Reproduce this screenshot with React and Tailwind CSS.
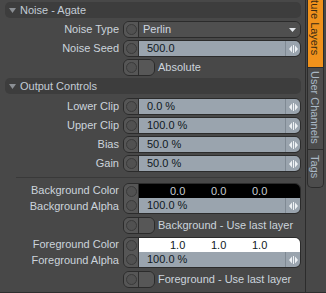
import React from "react";

const Toggle = ({ h = "h-full" }) => (
  <div className={`w-[15px] ${h} shrink-0 bg-[#565656] border-r border-[#2d2d2d] flex items-center justify-center`}>
    <div className="w-[11px] h-[11px] rounded-full border border-[#3a3a3a] bg-[#515151]" />
  </div>
);

const Arrows = () => (
  <div className="w-[15px] h-full shrink-0 border-l border-[#7f8993] flex items-center justify-center">
    <svg width="9" height="8" viewBox="0 0 9 8">
      <path d="M3 0.5 L0 4 L3 7.5Z M6 0.5 L9 4 L6 7.5Z" fill="#eef1f4" />
      <rect x="4" y="0" width="1" height="8" fill="#eef1f4" />
    </svg>
  </div>
);

const Header = ({ title, className = "" }) => (
  <div className={`h-[16px] rounded-[5px] bg-[#3d3d3d] flex items-center pl-[4px] ${className}`}>
    <svg width="7" height="5" viewBox="0 0 7 5" className="mr-[4px]">
      <path d="M0 0 L7 0 L3.5 5Z" fill="#8b8f94" />
    </svg>
    <span className="text-[#c3ccd6]">{title}</span>
  </div>
);

const Label = ({ children }) => (
  <div className="w-[114px] shrink-0 text-right text-[#ccd4dc] whitespace-nowrap">{children}</div>
);

const NumRow = ({ label, value, className = "" }) => (
  <div className={`flex items-center h-[17px] ${className}`}>
    <Label>{label}</Label>
    <div className="ml-[4px] w-[178px] h-[17px] flex rounded-[6px] border border-[#2b2b2b] overflow-hidden">
      <Toggle />
      <div className="flex-1 bg-[#9aa4ae] flex items-center pl-[8px] text-[#101822]">{value}</div>
      <div className="bg-[#9aa4ae] h-full flex">
        <Arrows />
      </div>
    </div>
  </div>
);

const CheckRow = ({ label, className = "" }) => (
  <div className={`flex items-center h-[17px] ${className}`}>
    <div className="w-[114px] shrink-0" />
    <div className="ml-[4px] w-[32px] h-[17px] flex rounded-[6px] border border-[#2b2b2b] overflow-hidden">
      <Toggle />
      <div className="flex-1 bg-[#575757]" />
    </div>
    <span className="ml-[3px] text-[#ccd4dc] whitespace-nowrap">{label}</span>
  </div>
);

const ColorBlock = ({ kind, dark, className = "" }) => (
  <div className={`flex ${className}`}>
    <div className="w-[114px] shrink-0 flex flex-col text-right text-[#ccd4dc]">
      <div className="h-[15px] leading-[15px]">{kind} Color</div>
      <div className="h-[16px] leading-[16px]">{kind} Alpha</div>
    </div>
    <div className="ml-[4px] w-[178px] h-[31px] flex flex-col rounded-[6px] border border-[#2b2b2b] overflow-hidden">
      <div className="flex h-[14px]">
        <Toggle />
        <div className={`flex-1 flex items-center ${dark ? "bg-black text-[#c8cdd2]" : "bg-white text-[#101822]"}`}>
          <span className="ml-[31px] w-[41px]">{dark ? "0.0" : "1.0"}</span>
          <span className="w-[41px]">{dark ? "0.0" : "1.0"}</span>
          <span className="w-[41px]">{dark ? "0.0" : "1.0"}</span>
        </div>
      </div>
      <div className="flex h-[15px]">
        <Toggle />
        <div className="flex-1 bg-[#9aa4ae] flex items-center pl-[8px] text-[#101822]">100.0 %</div>
        <div className="bg-[#9aa4ae] h-full flex">
          <Arrows />
        </div>
      </div>
    </div>
  </div>
);

export default function App() {
  return (
    <div
      className="w-[326px] h-[293px] bg-[#484848] flex overflow-hidden border-b border-[#2e2e2e] text-[11px] leading-none"
      style={{ fontFamily: "'Liberation Sans', Arial, sans-serif" }}
    >
      <div className="w-[305px] shrink-0 flex flex-col pt-[2px] pl-[5px] pr-[4px]">
        <Header title="Noise - Agate" />
        <div className="flex items-center h-[17px] mt-[3px]">
          <Label>Noise Type</Label>
          <div className="ml-[4px] w-[178px] h-[17px] flex rounded-[6px] border border-[#2b2b2b] overflow-hidden">
            <Toggle />
            <div className="flex-1 bg-[#4f4f4f] flex items-center pl-[4px] text-[#d0d8e0]">Perlin</div>
            <div className="w-[15px] bg-[#4f4f4f] flex items-center justify-center">
              <svg width="7" height="4" viewBox="0 0 7 4">
                <path d="M0 0 L7 0 L3.5 4Z" fill="#e4e8ec" />
              </svg>
            </div>
          </div>
        </div>
        <NumRow label="Noise Seed" value="500.0" className="mt-[2px]" />
        <CheckRow label="Absolute" className="mt-[2px]" />
        <Header title="Output Controls" className="mt-[2px]" />
        <NumRow label="Lower Clip" value="0.0 %" className="mt-[4px]" />
        <NumRow label="Upper Clip" value="100.0 %" className="mt-[2px]" />
        <NumRow label="Bias" value="50.0 %" className="mt-[2px]" />
        <NumRow label="Gain" value="50.0 %" className="mt-[2px]" />
        <div className="ml-[11px] mt-[5px] h-[1px] bg-[#393939]" />
        <ColorBlock kind="Background" dark className="mt-[5px]" />
        <CheckRow label="Background - Use last layer" className="mt-[3px]" />
        <ColorBlock kind="Foreground" className="mt-[3px]" />
        <CheckRow label="Foreground - Use last layer" className="mt-[3px]" />
      </div>
      <div className="w-[21px] shrink-0 border-l border-[#2c2c2c] pl-[1px] flex flex-col overflow-hidden">
        <div className="w-[17px] h-[93px] -mt-[25px] shrink-0 bg-[#f0921c] border border-[#2c2c2c] flex justify-start pl-[1px] items-end pb-[12px]">
          <span className="text-[#3a2a12] whitespace-nowrap [writing-mode:vertical-rl]">Texture Layers</span>
        </div>
        <div className="w-[17px] h-[82px] shrink-0 bg-[#4c4c4c] border-x border-b border-[#2c2c2c] flex justify-start pl-[1px] pt-[3px]">
          <span className="text-[#aab8c6] whitespace-nowrap [writing-mode:vertical-rl]">User Channels</span>
        </div>
        <div className="w-[17px] h-[38px] shrink-0 bg-[#4c4c4c] border-x border-b border-[#2c2c2c] rounded-b-[5px] flex justify-start pl-[1px] pt-[5px]">
          <span className="text-[#aab8c6] whitespace-nowrap [writing-mode:vertical-rl]">Tags</span>
        </div>
      </div>
    </div>
  );
}
